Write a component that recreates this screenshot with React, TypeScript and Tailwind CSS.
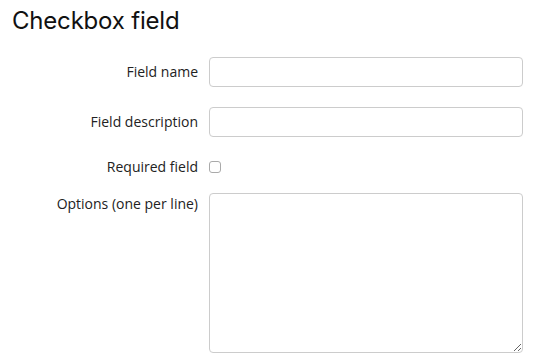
import React from "react";

const labelCls = "w-[198px] shrink-0 text-right text-[14px] text-[#222] leading-5";
const inputCls = "w-[314px] h-[30px] rounded-[4px] border border-[#ccc] bg-white px-2 text-[14px] outline-none";

export default function App() {
  return (
    <div className="min-h-[364px] w-[535px] bg-white font-['Open_Sans',sans-serif]">
      {/* Title */}
      <h1 className="pl-[12px] pt-[5px] text-[24px] leading-[32px] text-[#111] font-['Inter',sans-serif] font-normal tracking-[-0.2px]">
        Checkbox field
      </h1>

      <form className="mt-[20px] flex flex-col">
        <div className="flex items-center gap-[11px]">
          <label className={labelCls}>Field name</label>
          <input type="text" className={inputCls} />
        </div>

        <div className="mt-[20px] flex items-center gap-[11px]">
          <label className={labelCls}>Field description</label>
          <input type="text" className={inputCls} />
        </div>

        <div className="mt-[20px] flex items-center gap-[11px]">
          <label className={labelCls}>Required field</label>
          <input type="checkbox" className="m-0 h-[12px] w-[12px] appearance-none rounded-[3px] border border-[#aaa] bg-white" />
        </div>

        <div className="mt-[16px] flex items-start gap-[11px]">
          <label className={`${labelCls} pt-[1px]`}>Options (one per line)</label>
          <textarea className="w-[314px] h-[160px] rounded-[4px] border border-[#ccc] bg-white px-2 text-[14px] outline-none" />
        </div>
      </form>
    </div>
  );
}
